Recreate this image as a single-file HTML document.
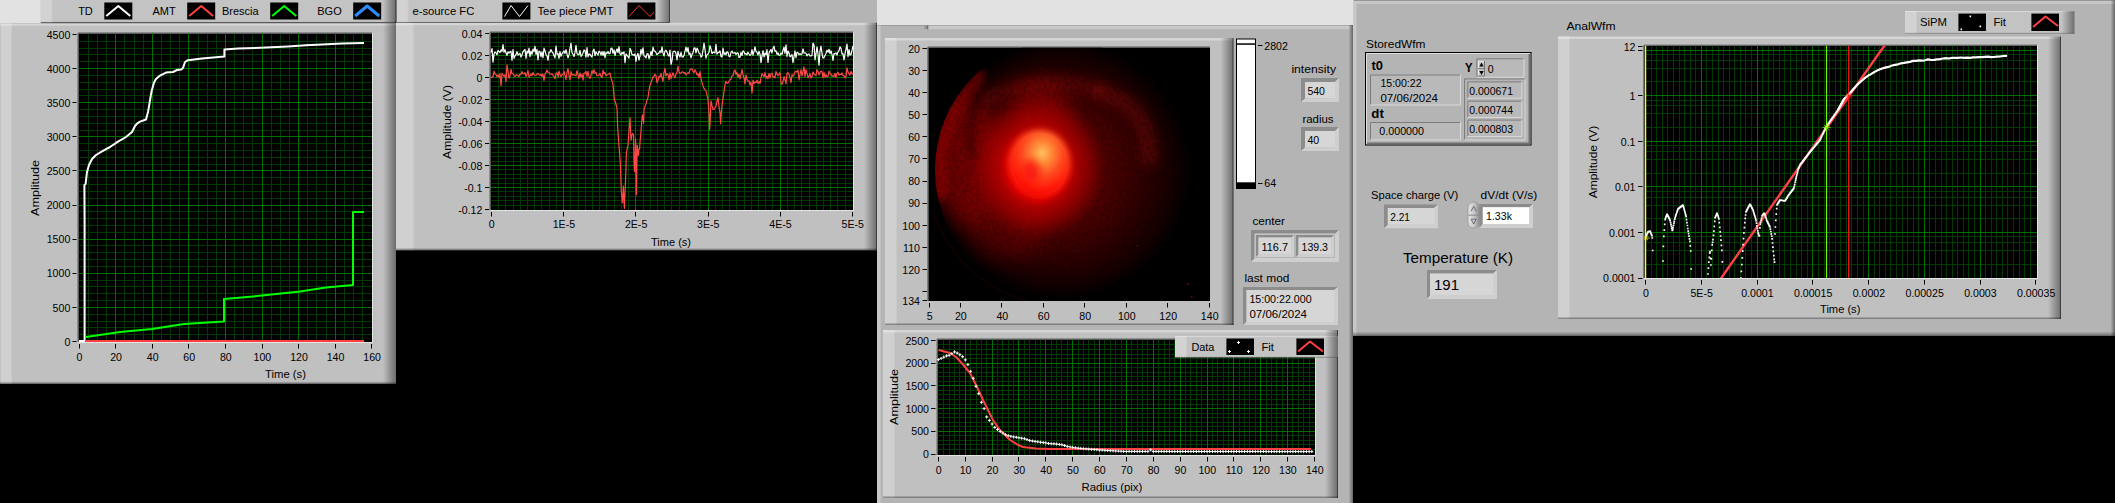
<!DOCTYPE html><html><head><meta charset="utf-8"><title>LabVIEW panels</title><style>html,body{margin:0;padding:0;background:#000;width:2115px;height:503px;overflow:hidden}</style></head><body><svg width="2115" height="503" viewBox="0 0 2115 503" font-family='"Liberation Sans", sans-serif' style="display:block"><defs><linearGradient id="g1" gradientUnits="objectBoundingBox" x1="0" y1="0" x2="1" y2="0"><stop offset="0" stop-color="#fff" stop-opacity="0.26"/><stop offset="0.85" stop-color="#fff" stop-opacity="0.26"/><stop offset="1" stop-color="#fff" stop-opacity="0"/></linearGradient><linearGradient id="g2" gradientUnits="objectBoundingBox" x1="0" y1="0" x2="1" y2="0"><stop offset="0" stop-color="#000" stop-opacity="0"/><stop offset="1" stop-color="#000" stop-opacity="0.44"/></linearGradient><linearGradient id="g3" gradientUnits="objectBoundingBox" x1="0" y1="0" x2="0" y2="1"><stop offset="0" stop-color="#000" stop-opacity="0"/><stop offset="1" stop-color="#000" stop-opacity="0.42"/></linearGradient><linearGradient id="g4" gradientUnits="objectBoundingBox" x1="0" y1="0" x2="1" y2="0"><stop offset="0" stop-color="#a6a6a6"/><stop offset="0.6" stop-color="#8c8c8c"/><stop offset="1" stop-color="#5c5c5c"/></linearGradient><clipPath id="imclip"><rect x="928.4" y="47.5" width="281.6" height="253.5"/></clipPath>
<filter id="noise" x="0" y="0" width="100%" height="100%"><feTurbulence type="fractalNoise" baseFrequency="0.3" numOctaves="2" seed="3" result="n"/><feColorMatrix in="n" type="matrix" values="0 0 0 0 0  0 0 0 0 0  0 0 0 0 0  0.55 0 0 0 -0.17"/></filter>
<filter id="b3" filterUnits="userSpaceOnUse" x="860" y="0" width="420" height="360"><feGaussianBlur stdDeviation="3"/></filter>
<filter id="b6" filterUnits="userSpaceOnUse" x="860" y="0" width="420" height="360"><feGaussianBlur stdDeviation="6"/></filter>
<filter id="b20" filterUnits="userSpaceOnUse" x="860" y="0" width="420" height="360"><feGaussianBlur stdDeviation="22"/></filter>
<filter id="b10" filterUnits="userSpaceOnUse" x="860" y="0" width="420" height="360"><feGaussianBlur stdDeviation="10"/></filter>
<radialGradient id="disk" gradientUnits="userSpaceOnUse" cx="1071" cy="172" r="137" fx="1052" fy="176"><stop offset="0" stop-color="#880000"/><stop offset="0.35" stop-color="#740000"/><stop offset="0.62" stop-color="#5e0000"/><stop offset="0.82" stop-color="#480000"/><stop offset="0.94" stop-color="#340000"/><stop offset="1" stop-color="#000"/></radialGradient>
<radialGradient id="halo" cx="0.5" cy="0.5" r="0.5"><stop offset="0" stop-color="#e00000" stop-opacity="1"/><stop offset="0.42" stop-color="#c80000" stop-opacity="0.95"/><stop offset="0.62" stop-color="#a00000" stop-opacity="0.6"/><stop offset="1" stop-color="#800000" stop-opacity="0"/></radialGradient>
<radialGradient id="core" cx="0.55" cy="0.32" r="0.75"><stop offset="0" stop-color="#ffc060"/><stop offset="0.22" stop-color="#ff8c38"/><stop offset="0.5" stop-color="#ff4a20"/><stop offset="0.8" stop-color="#ff1808"/><stop offset="1" stop-color="#f00000"/></radialGradient><clipPath id="dclip"><ellipse cx="1064" cy="170" rx="129" ry="131"/></clipPath>
<radialGradient id="disk2" gradientUnits="userSpaceOnUse" cx="1062" cy="170" r="129" fx="1040" fy="172"><stop offset="0" stop-color="#700000"/><stop offset="0.35" stop-color="#5c0000"/><stop offset="0.55" stop-color="#420000"/><stop offset="0.75" stop-color="#280000"/><stop offset="0.9" stop-color="#130000"/><stop offset="1" stop-color="#000"/></radialGradient>
<radialGradient id="halo2" cx="0.5" cy="0.5" r="0.5"><stop offset="0" stop-color="#e00000"/><stop offset="0.42" stop-color="#dc0000"/><stop offset="0.56" stop-color="#b80000" stop-opacity="0.85"/><stop offset="0.76" stop-color="#a00000" stop-opacity="0.6"/><stop offset="1" stop-color="#800000" stop-opacity="0"/></radialGradient><linearGradient id="pill" x1="0" y1="0" x2="1" y2="0"><stop offset="0" stop-color="#e6e6e6"/><stop offset="0.55" stop-color="#c6c6c6"/><stop offset="1" stop-color="#8e8e8e"/></linearGradient><clipPath id="p4clip"><rect x="1644.3" y="45.7" width="392.7" height="232.3"/></clipPath></defs><rect x="0" y="0" width="2115" height="503" fill="#000" />
<rect x="0" y="0" width="41" height="23.5" fill="#e2e2e2" />
<rect x="669" y="0" width="209" height="23" fill="#b4b4b4" />
<rect x="877" y="0" width="477" height="25" fill="#e2e2e2" />
<rect x="0" y="23.2" width="396" height="360.6" fill="#c0c0c0" />
<rect x="0" y="23.2" width="12.5" height="360.6" fill="url(#g1)" />
<rect x="0" y="23.2" width="396" height="2.5" fill="#fff" fill-opacity="0.33"/>
<rect x="383" y="23.2" width="13" height="360.6" fill="url(#g2)" />
<rect x="0" y="381.3" width="396" height="2.5" fill="url(#g3)" />
<rect x="0" y="23.2" width="1" height="360.6" fill="#000" fill-opacity="0.06"/>
<rect x="40.5" y="0" width="355" height="22.6" fill="#c3c3c3" />
<rect x="40.5" y="0" width="12.5" height="22.6" fill="url(#g1)" />
<rect x="382.5" y="0" width="13" height="22.6" fill="url(#g2)" />
<rect x="40.5" y="21.4" width="355" height="1.2" fill="url(#g3)" />
<text x="92.8" y="14.7" font-size="11" text-anchor="end" >TD</text>
<rect x="104.3" y="2.5" width="28" height="17" fill="#000" />
<path d="M106.3,16.0 L118.3,6.0 L130.3,16.0" stroke="#fff" stroke-width="2" fill="none" stroke-linejoin="round" />
<text x="175.7" y="14.7" font-size="11" text-anchor="end" >AMT</text>
<rect x="187.2" y="2.5" width="28" height="17" fill="#000" />
<path d="M189.2,16.0 L201.2,6.0 L213.2,16.0" stroke="#ff4040" stroke-width="2" fill="none" stroke-linejoin="round" />
<text x="258.7" y="14.7" font-size="11" text-anchor="end" >Brescia</text>
<rect x="270.2" y="2.5" width="28" height="17" fill="#000" />
<path d="M272.2,16.0 L284.2,6.0 L296.2,16.0" stroke="#00ff00" stroke-width="2" fill="none" stroke-linejoin="round" />
<text x="341.7" y="14.7" font-size="11" text-anchor="end" >BGO</text>
<rect x="353.2" y="2.5" width="28" height="17" fill="#000" />
<path d="M355.2,16.0 L367.2,6.0 L379.2,16.0" stroke="#2e8cff" stroke-width="3" fill="none" stroke-linejoin="round" />
<rect x="78.5" y="33.5" width="293.5" height="308.5" fill="#000" />
<path d="M88.5,33.5V342M97.5,33.5V342M106.5,33.5V342M115.5,33.5V342M124.5,33.5V342M134.5,33.5V342M143.5,33.5V342M152.5,33.5V342M161.5,33.5V342M170.5,33.5V342M179.5,33.5V342M188.5,33.5V342M198.5,33.5V342M207.5,33.5V342M216.5,33.5V342M225.5,33.5V342M234.5,33.5V342M243.5,33.5V342M252.5,33.5V342M262.5,33.5V342M271.5,33.5V342M280.5,33.5V342M289.5,33.5V342M298.5,33.5V342M307.5,33.5V342M316.5,33.5V342M326.5,33.5V342M335.5,33.5V342M344.5,33.5V342M353.5,33.5V342M362.5,33.5V342M78.5,334.5H372M78.5,327.5H372M78.5,321.5H372M78.5,314.5H372M78.5,307.5H372M78.5,300.5H372M78.5,293.5H372M78.5,286.5H372M78.5,280.5H372M78.5,273.5H372M78.5,266.5H372M78.5,259.5H372M78.5,252.5H372M78.5,245.5H372M78.5,239.5H372M78.5,232.5H372M78.5,225.5H372M78.5,218.5H372M78.5,211.5H372M78.5,205.5H372M78.5,198.5H372M78.5,191.5H372M78.5,184.5H372M78.5,177.5H372M78.5,170.5H372M78.5,164.5H372M78.5,157.5H372M78.5,150.5H372M78.5,143.5H372M78.5,136.5H372M78.5,130.5H372M78.5,123.5H372M78.5,116.5H372M78.5,109.5H372M78.5,102.5H372M78.5,95.5H372M78.5,89.5H372M78.5,82.5H372M78.5,75.5H372M78.5,68.5H372M78.5,61.5H372M78.5,54.5H372M78.5,48.5H372M78.5,41.5H372" stroke="#003a00" stroke-width="1" fill="none"/>
<path d="M115.5,33.5V342M152.5,33.5V342M188.5,33.5V342M225.5,33.5V342M262.5,33.5V342M298.5,33.5V342M335.5,33.5V342M78.5,307.5H372M78.5,273.5H372M78.5,239.5H372M78.5,205.5H372M78.5,170.5H372M78.5,136.5H372M78.5,102.5H372M78.5,68.5H372" stroke="#007000" stroke-width="1" fill="none"/>
<path d="M78,342V33H372" stroke="#5a5a5a" stroke-width="1" fill="none"/>
<path d="M78.5,342.5H372.5V33.5" stroke="#e4e4e4" stroke-width="1" fill="none"/>
<path d="M72.5,341.5H76.5M72.5,307.5H76.5M72.5,273.5H76.5M72.5,239.5H76.5M72.5,205.5H76.5M72.5,170.5H76.5M72.5,136.5H76.5M72.5,102.5H76.5M72.5,68.5H76.5M72.5,34.5H76.5" stroke="#000" stroke-width="1" fill="none"/>
<text x="70.3" y="345.7" font-size="10.6" text-anchor="end" >0</text>
<text x="70.3" y="311.59" font-size="10.6" text-anchor="end" >500</text>
<text x="70.3" y="277.48" font-size="10.6" text-anchor="end" >1000</text>
<text x="70.3" y="243.37" font-size="10.6" text-anchor="end" >1500</text>
<text x="70.3" y="209.26" font-size="10.6" text-anchor="end" >2000</text>
<text x="70.3" y="175.15" font-size="10.6" text-anchor="end" >2500</text>
<text x="70.3" y="141.04" font-size="10.6" text-anchor="end" >3000</text>
<text x="70.3" y="106.93" font-size="10.6" text-anchor="end" >3500</text>
<text x="70.3" y="72.82" font-size="10.6" text-anchor="end" >4000</text>
<text x="70.3" y="38.71" font-size="10.6" text-anchor="end" >4500</text>
<path d="M79.5,344V348.5M115.5,344V348.5M152.5,344V348.5M188.5,344V348.5M225.5,344V348.5M262.5,344V348.5M298.5,344V348.5M335.5,344V348.5M371.5,344V348.5" stroke="#000" stroke-width="1" fill="none"/>
<text x="79.5" y="360.7" font-size="10.6" text-anchor="middle" >0</text>
<text x="116.08" y="360.7" font-size="10.6" text-anchor="middle" >20</text>
<text x="152.66" y="360.7" font-size="10.6" text-anchor="middle" >40</text>
<text x="189.24" y="360.7" font-size="10.6" text-anchor="middle" >60</text>
<text x="225.82" y="360.7" font-size="10.6" text-anchor="middle" >80</text>
<text x="262.4" y="360.7" font-size="10.6" text-anchor="middle" >100</text>
<text x="298.98" y="360.7" font-size="10.6" text-anchor="middle" >120</text>
<text x="335.56" y="360.7" font-size="10.6" text-anchor="middle" >140</text>
<text x="372.14" y="360.7" font-size="10.6" text-anchor="middle" >160</text>
<text transform="translate(38.8,188) rotate(-90)" font-size="11" text-anchor="middle" textLength="56" lengthAdjust="spacingAndGlyphs">Amplitude</text>
<text x="265" y="377.7" font-size="11" textLength="41" lengthAdjust="spacingAndGlyphs" >Time (s)</text>
<path d="M86.0,341.0 L364.0,341.0" stroke="#ff4040" stroke-width="2" fill="none" stroke-linejoin="round" />
<path d="M86.0,337.0 L120.0,332.0 L152.0,329.0 L184.0,324.0 L224.0,321.4 L224.0,299.0 L262.0,295.6 L300.0,291.6 L326.0,287.6 L353.0,285.0 L353.0,212.0 L364.0,212.0" stroke="#00ff00" stroke-width="2" fill="none" stroke-linejoin="round" />
<path d="M79.0,341.0 L84.6,341.0 L84.6,220.0 L84.4,185.0 L85.6,184.0 L87.0,172.0 L89.0,165.0 L92.0,159.0 L96.0,155.0 L102.0,151.4 L110.0,147.0 L118.0,141.6 L126.0,137.0 L132.0,132.0 L135.0,126.0 L137.0,123.6 L140.0,121.6 L146.0,119.5 L148.0,112.0 L149.4,104.0 L151.4,92.0 L154.0,82.4 L156.0,79.0 L160.0,75.6 L166.0,72.6 L173.0,72.0 L177.0,70.0 L181.0,69.6 L183.0,68.0 L185.0,62.0 L188.0,60.2 L202.0,58.6 L224.4,56.6 L224.4,49.4 L238.0,48.6 L266.0,47.6 L288.0,46.4 L306.0,45.2 L322.0,44.4 L342.0,43.6 L364.0,43.0" stroke="#fff" stroke-width="2" fill="none" stroke-linejoin="round" />
<rect x="396" y="22.8" width="481" height="227.4" fill="#c0c0c0" />
<rect x="396" y="22.8" width="19" height="227.4" fill="url(#g1)" />
<rect x="396" y="22.8" width="481" height="2.5" fill="#fff" fill-opacity="0.33"/>
<rect x="864" y="22.8" width="13" height="227.4" fill="url(#g2)" />
<rect x="396" y="247.7" width="481" height="2.5" fill="url(#g3)" />
<rect x="876" y="22.8" width="1" height="227.4" fill="#000" fill-opacity="0.45"/>
<rect x="396.5" y="0" width="273.5" height="22.6" fill="#c3c3c3" />
<rect x="396.5" y="0" width="12.5" height="22.6" fill="url(#g1)" />
<rect x="657" y="0" width="13" height="22.6" fill="url(#g2)" />
<rect x="396.5" y="21.4" width="273.5" height="1.2" fill="url(#g3)" />
<rect x="669" y="0" width="1" height="22.6" fill="#000" fill-opacity="0.45"/>
<text x="412.4" y="14.5" font-size="11" textLength="62" lengthAdjust="spacingAndGlyphs" >e-source FC</text>
<rect x="502.4" y="2.5" width="28" height="17" fill="#000" />
<path d="M504.5,16.5 L511.0,5.5 L519.5,16.5 L528.0,5.5" stroke="#fff" stroke-width="1" fill="none" stroke-linejoin="round" />
<text x="537.4" y="14.8" font-size="11" textLength="76.2" lengthAdjust="spacingAndGlyphs" >Tee piece PMT</text>
<rect x="627.4" y="2.5" width="28" height="17" fill="#000" />
<path d="M629.0,16.5 L639.0,5.5 L650.0,16.5 L654.0,12.0" stroke="#ff3030" stroke-width="1" fill="none" stroke-linejoin="round" />
<rect x="490.5" y="32.5" width="362.5" height="177.5" fill="#000" />
<path d="M498.5,32.5V210M505.5,32.5V210M513.5,32.5V210M520.5,32.5V210M527.5,32.5V210M534.5,32.5V210M541.5,32.5V210M549.5,32.5V210M556.5,32.5V210M563.5,32.5V210M570.5,32.5V210M578.5,32.5V210M585.5,32.5V210M592.5,32.5V210M599.5,32.5V210M606.5,32.5V210M614.5,32.5V210M621.5,32.5V210M628.5,32.5V210M635.5,32.5V210M643.5,32.5V210M650.5,32.5V210M657.5,32.5V210M664.5,32.5V210M671.5,32.5V210M679.5,32.5V210M686.5,32.5V210M693.5,32.5V210M700.5,32.5V210M708.5,32.5V210M715.5,32.5V210M722.5,32.5V210M729.5,32.5V210M736.5,32.5V210M744.5,32.5V210M751.5,32.5V210M758.5,32.5V210M765.5,32.5V210M772.5,32.5V210M780.5,32.5V210M787.5,32.5V210M794.5,32.5V210M801.5,32.5V210M809.5,32.5V210M816.5,32.5V210M823.5,32.5V210M830.5,32.5V210M837.5,32.5V210M845.5,32.5V210M490.5,205.5H853M490.5,200.5H853M490.5,196.5H853M490.5,191.5H853M490.5,187.5H853M490.5,183.5H853M490.5,178.5H853M490.5,174.5H853M490.5,169.5H853M490.5,165.5H853M490.5,161.5H853M490.5,156.5H853M490.5,152.5H853M490.5,147.5H853M490.5,143.5H853M490.5,139.5H853M490.5,134.5H853M490.5,130.5H853M490.5,125.5H853M490.5,121.5H853M490.5,117.5H853M490.5,112.5H853M490.5,108.5H853M490.5,103.5H853M490.5,99.5H853M490.5,95.5H853M490.5,90.5H853M490.5,86.5H853M490.5,81.5H853M490.5,77.5H853M490.5,73.5H853M490.5,68.5H853M490.5,64.5H853M490.5,59.5H853M490.5,55.5H853M490.5,51.5H853M490.5,46.5H853M490.5,42.5H853M490.5,37.5H853" stroke="#003a00" stroke-width="1" fill="none"/>
<path d="M563.5,32.5V210M635.5,32.5V210M708.5,32.5V210M780.5,32.5V210M490.5,187.5H853M490.5,165.5H853M490.5,143.5H853M490.5,121.5H853M490.5,99.5H853M490.5,77.5H853M490.5,55.5H853" stroke="#007000" stroke-width="1" fill="none"/>
<path d="M490,210V32H853" stroke="#5a5a5a" stroke-width="1" fill="none"/>
<path d="M490.5,210.5H853.5V32.5" stroke="#e4e4e4" stroke-width="1" fill="none"/>
<path d="M485,209.5H489M485,187.5H489M485,165.5H489M485,143.5H489M485,121.5H489M485,99.5H489M485,77.5H489M485,55.5H489M485,33.5H489" stroke="#000" stroke-width="1" fill="none"/>
<text x="482.4" y="37.6" font-size="10.6" text-anchor="end" >0.04</text>
<text x="482.4" y="59.6" font-size="10.6" text-anchor="end" >0.02</text>
<text x="482.4" y="81.6" font-size="10.6" text-anchor="end" >0</text>
<text x="482.4" y="103.6" font-size="10.6" text-anchor="end" >-0.02</text>
<text x="482.4" y="125.6" font-size="10.6" text-anchor="end" >-0.04</text>
<text x="482.4" y="147.6" font-size="10.6" text-anchor="end" >-0.06</text>
<text x="482.4" y="169.6" font-size="10.6" text-anchor="end" >-0.08</text>
<text x="482.4" y="191.6" font-size="10.6" text-anchor="end" >-0.1</text>
<text x="482.4" y="213.6" font-size="10.6" text-anchor="end" >-0.12</text>
<path d="M491.5,212V216.5M563.5,212V216.5M635.5,212V216.5M708.5,212V216.5M780.5,212V216.5M852.5,212V216.5" stroke="#000" stroke-width="1" fill="none"/>
<text x="491.7" y="228.4" font-size="10.6" text-anchor="middle" >0</text>
<text x="563.9" y="228.4" font-size="10.6" text-anchor="middle" >1E-5</text>
<text x="636.1" y="228.4" font-size="10.6" text-anchor="middle" >2E-5</text>
<text x="708.3" y="228.4" font-size="10.6" text-anchor="middle" >3E-5</text>
<text x="780.5" y="228.4" font-size="10.6" text-anchor="middle" >4E-5</text>
<text x="852.7" y="228.4" font-size="10.6" text-anchor="middle" >5E-5</text>
<text transform="translate(450.5,122) rotate(-90)" font-size="11" text-anchor="middle" textLength="74" lengthAdjust="spacingAndGlyphs">Amplitude (V)</text>
<text x="651" y="245.6" font-size="11" textLength="40" lengthAdjust="spacingAndGlyphs" >Time (s)</text>
<path d="M491.0,52.3 L492.0,48.6 L493.0,62.1 L494.0,54.1 L495.0,52.1 L496.0,52.7 L497.0,54.8 L498.0,50.4 L499.0,51.6 L500.0,52.5 L501.0,49.9 L502.0,51.5 L503.0,44.6 L504.0,52.2 L505.0,49.7 L506.0,53.1 L507.0,55.3 L508.0,51.8 L509.0,53.2 L510.0,51.9 L511.0,51.4 L512.0,60.3 L513.0,49.6 L514.0,58.3 L515.0,56.0 L516.0,54.6 L517.0,51.7 L518.0,55.1 L519.0,54.1 L520.0,53.5 L521.0,57.0 L522.0,54.7 L523.0,51.8 L524.0,50.3 L525.0,49.3 L526.0,58.3 L527.0,51.1 L528.0,53.1 L529.0,48.2 L530.0,56.6 L531.0,51.2 L532.0,54.3 L533.0,49.0 L534.0,51.7 L535.0,46.4 L536.0,54.3 L537.0,49.4 L538.0,60.0 L539.0,51.2 L540.0,51.5 L541.0,56.7 L542.0,51.8 L543.0,57.6 L544.0,48.2 L545.0,50.8 L546.0,54.6 L547.0,55.8 L548.0,60.3 L549.0,52.0 L550.0,52.3 L551.0,49.5 L552.0,51.8 L553.0,53.0 L554.0,55.5 L555.0,58.0 L556.0,46.1 L557.0,54.1 L558.0,53.6 L559.0,58.5 L560.0,51.6 L561.0,56.3 L562.0,53.6 L563.0,52.3 L564.0,51.0 L565.0,53.5 L566.0,49.7 L567.0,53.8 L568.0,57.9 L569.0,54.7 L570.0,48.3 L571.0,43.0 L572.0,52.7 L573.0,54.3 L574.0,56.5 L575.0,52.6 L576.0,45.4 L577.0,53.6 L578.0,54.7 L579.0,54.7 L580.0,50.4 L581.0,56.4 L582.0,55.0 L583.0,53.0 L584.0,49.9 L585.0,50.6 L586.0,57.2 L587.0,47.7 L588.0,56.8 L589.0,54.1 L590.0,54.1 L591.0,56.1 L592.0,57.0 L593.0,51.0 L594.0,49.1 L595.0,55.6 L596.0,51.8 L597.0,53.5 L598.0,55.0 L599.0,51.2 L600.0,51.9 L601.0,55.1 L602.0,51.6 L603.0,55.3 L604.0,51.4 L605.0,57.7 L606.0,52.3 L607.0,53.3 L608.0,51.5 L609.0,53.7 L610.0,53.7 L611.0,48.4 L612.0,48.1 L613.0,53.4 L614.0,49.8 L615.0,55.5 L616.0,51.5 L617.0,48.9 L618.0,52.7 L619.0,46.6 L620.0,53.9 L621.0,55.0 L622.0,52.3 L623.0,53.8 L624.0,51.8 L625.0,62.7 L626.0,53.9 L627.0,55.4 L628.0,56.5 L629.0,58.2 L630.0,48.3 L631.0,50.5 L632.0,54.9 L633.0,54.5 L634.0,55.4 L635.0,53.8 L636.0,61.4 L637.0,55.4 L638.0,53.3 L639.0,60.2 L640.0,56.1 L641.0,49.3 L642.0,54.3 L643.0,47.8 L644.0,55.8 L645.0,56.6 L646.0,57.9 L647.0,53.8 L648.0,53.5 L649.0,58.7 L650.0,55.8 L651.0,51.3 L652.0,55.7 L653.0,47.2 L654.0,51.0 L655.0,51.0 L656.0,52.7 L657.0,54.7 L658.0,53.6 L659.0,53.1 L660.0,50.8 L661.0,52.7 L662.0,46.9 L663.0,53.1 L664.0,55.9 L665.0,51.1 L666.0,50.2 L667.0,52.3 L668.0,54.8 L669.0,56.2 L670.0,50.1 L671.0,64.3 L672.0,60.8 L673.0,51.9 L674.0,51.1 L675.0,51.5 L676.0,53.4 L677.0,60.0 L678.0,51.3 L679.0,55.3 L680.0,56.9 L681.0,52.3 L682.0,56.9 L683.0,57.2 L684.0,55.7 L685.0,51.2 L686.0,47.1 L687.0,51.8 L688.0,47.6 L689.0,54.5 L690.0,52.9 L691.0,57.9 L692.0,54.4 L693.0,52.5 L694.0,48.1 L695.0,47.9 L696.0,52.9 L697.0,48.1 L698.0,50.1 L699.0,53.1 L700.0,53.7 L701.0,57.1 L702.0,56.1 L703.0,50.1 L704.0,43.0 L705.0,49.7 L706.0,58.2 L707.0,54.9 L708.0,54.0 L709.0,52.5 L710.0,45.7 L711.0,48.9 L712.0,53.5 L713.0,52.3 L714.0,52.2 L715.0,52.9 L716.0,44.3 L717.0,54.2 L718.0,52.8 L719.0,52.4 L720.0,50.9 L721.0,56.4 L722.0,56.9 L723.0,48.2 L724.0,54.3 L725.0,52.8 L726.0,54.8 L727.0,51.7 L728.0,52.3 L729.0,56.4 L730.0,56.7 L731.0,52.4 L732.0,51.1 L733.0,53.2 L734.0,53.0 L735.0,52.5 L736.0,54.4 L737.0,53.1 L738.0,52.9 L739.0,57.5 L740.0,57.2 L741.0,52.4 L742.0,55.5 L743.0,50.8 L744.0,51.6 L745.0,54.2 L746.0,53.4 L747.0,54.9 L748.0,52.2 L749.0,54.0 L750.0,55.4 L751.0,54.4 L752.0,49.5 L753.0,55.2 L754.0,51.7 L755.0,46.8 L756.0,51.3 L757.0,52.6 L758.0,55.0 L759.0,51.3 L760.0,54.1 L761.0,62.6 L762.0,55.6 L763.0,50.7 L764.0,57.0 L765.0,53.1 L766.0,54.7 L767.0,49.7 L768.0,62.5 L769.0,53.0 L770.0,51.1 L771.0,49.5 L772.0,53.0 L773.0,48.3 L774.0,46.2 L775.0,51.3 L776.0,50.7 L777.0,54.4 L778.0,52.7 L779.0,55.4 L780.0,55.2 L781.0,53.0 L782.0,54.3 L783.0,50.3 L784.0,47.1 L785.0,53.3 L786.0,44.9 L787.0,56.4 L788.0,51.1 L789.0,53.0 L790.0,56.8 L791.0,56.0 L792.0,54.4 L793.0,62.6 L794.0,56.6 L795.0,50.9 L796.0,57.7 L797.0,52.4 L798.0,52.8 L799.0,54.7 L800.0,53.6 L801.0,54.7 L802.0,53.9 L803.0,48.8 L804.0,53.2 L805.0,52.8 L806.0,53.2 L807.0,55.9 L808.0,54.3 L809.0,54.0 L810.0,55.8 L811.0,55.9 L812.0,55.4 L813.0,43.0 L814.0,44.7 L815.0,59.8 L816.0,53.7 L817.0,46.8 L818.0,54.2 L819.0,65.3 L820.0,51.2 L821.0,46.0 L822.0,53.5 L823.0,58.0 L824.0,57.9 L825.0,55.2 L826.0,53.5 L827.0,50.2 L828.0,52.2 L829.0,49.2 L830.0,53.6 L831.0,50.8 L832.0,54.5 L833.0,60.5 L834.0,53.7 L835.0,53.8 L836.0,52.8 L837.0,55.0 L838.0,52.0 L839.0,50.7 L840.0,46.9 L841.0,48.4 L842.0,54.0 L843.0,53.6 L844.0,59.8 L845.0,53.5 L846.0,49.3 L847.0,44.0 L848.0,56.6 L849.0,49.7 L850.0,55.1 L851.0,54.5 L852.0,50.4 L853.0,45.9" stroke="#fff" stroke-width="1.2" fill="none" stroke-linejoin="round" />
<path d="M491.0,78.3 L492.0,76.7 L493.0,76.9 L494.0,71.1 L495.0,74.0 L496.0,74.5 L497.0,76.7 L498.0,74.8 L499.0,77.4 L500.0,73.9 L501.0,85.8 L502.0,73.2 L503.0,74.8 L504.0,76.0 L505.0,74.8 L506.0,81.3 L507.0,64.8 L508.0,71.7 L509.0,78.2 L510.0,75.8 L511.0,69.4 L512.0,73.6 L513.0,73.7 L514.0,75.3 L515.0,76.5 L516.0,74.9 L517.0,75.1 L518.0,75.6 L519.0,76.6 L520.0,74.0 L521.0,74.5 L522.0,71.6 L523.0,73.7 L524.0,73.9 L525.0,72.5 L526.0,76.6 L527.0,74.1 L528.0,70.7 L529.0,77.0 L530.0,75.9 L531.0,73.9 L532.0,75.7 L533.0,72.5 L534.0,74.8 L535.0,75.0 L536.0,75.5 L537.0,74.1 L538.0,73.3 L539.0,74.6 L540.0,75.6 L541.0,74.1 L542.0,76.1 L543.0,74.2 L544.0,80.4 L545.0,74.1 L546.0,72.7 L547.0,70.0 L548.0,72.2 L549.0,72.3 L550.0,73.9 L551.0,74.2 L552.0,73.7 L553.0,75.5 L554.0,76.2 L555.0,78.9 L556.0,73.4 L557.0,72.7 L558.0,76.8 L559.0,71.2 L560.0,74.4 L561.0,76.7 L562.0,74.5 L563.0,74.6 L564.0,71.4 L565.0,75.4 L566.0,79.5 L567.0,72.2 L568.0,68.5 L569.0,75.3 L570.0,79.8 L571.0,71.6 L572.0,75.2 L573.0,74.4 L574.0,75.2 L575.0,75.1 L576.0,75.8 L577.0,70.5 L578.0,75.1 L579.0,78.5 L580.0,72.8 L581.0,77.1 L582.0,74.1 L583.0,80.2 L584.0,73.0 L585.0,73.1 L586.0,71.5 L587.0,76.1 L588.0,71.3 L589.0,77.0 L590.0,78.5 L591.0,75.5 L592.0,70.7 L593.0,73.7 L594.0,69.7 L595.0,73.1 L596.0,72.5 L597.0,75.7 L598.0,75.6 L599.0,74.9 L600.0,73.3 L601.0,76.7 L602.0,77.7 L603.0,70.2 L604.0,74.0 L605.0,72.4 L606.0,75.8 L607.0,75.1 L608.0,74.2 L609.0,74.0 L610.0,73.0 L611.0,78.3 L612.0,80.9 L613.0,84.3 L614.0,96.0 L614.4,100.8 L615.0,100.9 L616.0,104.5 L617.0,108.2 L617.6,125.8 L618.0,132.5 L619.0,145.7 L620.0,158.5 L620.4,164.5 L621.0,182.8 L621.4,193.1 L622.0,198.1 L622.4,202.6 L623.0,192.7 L623.4,186.1 L624.0,201.7 L624.4,208.4 L625.0,193.0 L625.6,179.2 L626.0,166.2 L626.4,153.3 L627.0,149.4 L628.0,145.4 L629.0,130.6 L630.0,117.6 L631.0,140.3 L632.0,134.8 L632.4,133.5 L633.0,133.8 L633.6,135.4 L634.0,164.3 L634.6,171.6 L635.0,159.3 L635.6,139.2 L636.0,166.4 L636.4,194.7 L637.0,156.8 L637.2,145.0 L638.0,151.6 L638.4,155.3 L639.0,149.4 L639.6,148.9 L640.0,142.5 L641.0,131.0 L642.0,118.5 L642.4,114.9 L643.0,117.9 L643.6,123.1 L644.0,109.5 L645.0,106.4 L646.0,103.9 L647.0,100.1 L648.0,97.4 L649.0,90.3 L650.0,85.2 L651.0,82.8 L652.0,79.7 L653.0,77.0 L654.0,76.2 L655.0,74.2 L656.0,75.7 L657.0,82.6 L658.0,80.5 L659.0,76.2 L660.0,77.1 L661.0,73.3 L662.0,77.7 L663.0,81.4 L664.0,72.5 L665.0,68.4 L666.0,76.0 L667.0,73.6 L668.0,74.5 L669.0,79.8 L670.0,72.8 L671.0,78.6 L672.0,75.5 L673.0,72.8 L674.0,76.0 L675.0,77.8 L676.0,74.2 L677.0,72.6 L678.0,66.4 L679.0,71.7 L680.0,73.6 L681.0,73.0 L682.0,72.0 L683.0,71.8 L684.0,73.2 L685.0,72.4 L686.0,75.0 L687.0,73.7 L688.0,72.7 L689.0,73.4 L690.0,69.9 L691.0,68.8 L692.0,68.9 L693.0,71.4 L694.0,72.6 L695.0,69.7 L696.0,71.7 L697.0,75.0 L698.0,73.7 L699.0,77.7 L700.0,71.6 L701.0,78.7 L702.0,82.9 L703.0,86.0 L704.0,88.5 L705.0,89.7 L706.0,90.7 L707.0,95.2 L708.0,99.0 L709.0,113.1 L709.6,129.8 L710.0,123.7 L711.0,100.9 L712.0,105.7 L713.0,109.5 L714.0,109.6 L715.0,107.6 L716.0,106.3 L717.0,101.0 L718.0,97.7 L719.0,106.7 L720.0,112.4 L720.6,123.6 L721.0,116.7 L722.0,105.5 L723.0,98.4 L724.0,91.5 L725.0,84.4 L726.0,81.2 L727.0,83.4 L728.0,83.0 L729.0,81.0 L730.0,79.7 L731.0,79.3 L732.0,75.6 L733.0,75.7 L734.0,71.1 L735.0,69.9 L736.0,74.5 L737.0,72.3 L738.0,77.2 L739.0,74.2 L740.0,78.8 L741.0,74.3 L742.0,69.5 L743.0,75.0 L744.0,77.7 L745.0,83.8 L746.0,74.9 L747.0,78.9 L748.0,81.2 L749.0,81.0 L750.0,84.8 L751.0,82.2 L752.0,93.1 L753.0,80.2 L754.0,83.7 L755.0,82.0 L756.0,82.6 L757.0,80.3 L758.0,83.3 L759.0,81.5 L760.0,83.6 L761.0,77.6 L762.0,73.7 L763.0,75.1 L764.0,76.6 L765.0,72.5 L766.0,78.1 L767.0,76.2 L768.0,78.7 L769.0,73.4 L770.0,78.2 L771.0,74.2 L772.0,73.2 L773.0,77.2 L774.0,76.5 L775.0,77.8 L776.0,71.4 L777.0,74.3 L778.0,75.6 L779.0,74.2 L780.0,72.7 L781.0,83.0 L782.0,84.3 L783.0,81.6 L784.0,76.5 L785.0,79.8 L786.0,83.6 L787.0,73.4 L788.0,72.7 L789.0,74.5 L790.0,77.9 L791.0,82.6 L792.0,74.7 L793.0,76.0 L794.0,74.5 L795.0,71.9 L796.0,71.2 L797.0,72.0 L798.0,70.0 L799.0,79.9 L800.0,74.7 L801.0,69.7 L802.0,75.8 L803.0,71.5 L804.0,66.9 L805.0,76.6 L806.0,69.7 L807.0,73.3 L808.0,77.8 L809.0,76.1 L810.0,73.6 L811.0,78.0 L812.0,76.6 L813.0,71.9 L814.0,74.1 L815.0,74.9 L816.0,75.7 L817.0,69.4 L818.0,71.8 L819.0,75.0 L820.0,72.5 L821.0,71.0 L822.0,71.6 L823.0,77.6 L824.0,72.3 L825.0,77.4 L826.0,74.5 L827.0,76.7 L828.0,76.5 L829.0,71.1 L830.0,73.2 L831.0,74.4 L832.0,76.1 L833.0,75.7 L834.0,76.5 L835.0,73.3 L836.0,77.5 L837.0,73.4 L838.0,72.5 L839.0,75.1 L840.0,74.3 L841.0,74.7 L842.0,72.9 L843.0,75.4 L844.0,75.8 L845.0,77.8 L846.0,76.6 L847.0,67.9 L848.0,71.9 L849.0,74.1 L850.0,75.0 L851.0,71.3 L852.0,74.1 L853.0,72.9" stroke="#ff4848" stroke-width="1.2" fill="none" stroke-linejoin="round" />
<rect x="877" y="25.1" width="476" height="484.9" fill="#b4b4b4" />
<rect x="877" y="25.1" width="3.5" height="481.4" fill="#fff" fill-opacity="0.27"/>
<rect x="1348.6" y="25.1" width="4.4" height="484.9" fill="url(#g2)" />
<rect x="877" y="505.6" width="476" height="4.4" fill="url(#g3)" />
<rect x="877" y="25.1" width="476" height="0.7" fill="#000" fill-opacity="0.06"/>
<rect x="928.3" y="25.6" width="421" height="3.6" fill="#c8c8c8" />
<rect x="924" y="25.4" width="4.2" height="3.8" fill="url(#g4)" />
<rect x="885" y="38" width="348.5" height="287" fill="#c0c0c0" />
<rect x="885" y="38" width="12.5" height="287" fill="url(#g1)" />
<rect x="885" y="38" width="348.5" height="2.5" fill="#fff" fill-opacity="0.33"/>
<rect x="1220.5" y="38" width="13" height="287" fill="url(#g2)" />
<rect x="885" y="322.5" width="348.5" height="2.5" fill="url(#g3)" />
<rect x="1232.5" y="38" width="1" height="287" fill="#000" fill-opacity="0.45"/>
<rect x="928.4" y="47.5" width="281.6" height="253.5" fill="#000" />
<g clip-path="url(#imclip)">
<circle cx="1062" cy="170" r="129" fill="url(#disk2)"/>
<g clip-path="url(#dclip)">
<ellipse cx="968" cy="160" rx="36" ry="66" fill="#b80000" opacity="0.5" filter="url(#b10)"/>
<ellipse cx="1006" cy="228" rx="40" ry="30" fill="#a80000" opacity="0.3" filter="url(#b10)"/>
<path d="M972.8,77.4 A129,131 0 0 0 936.5,190" stroke="#c80404" stroke-width="24" fill="none" opacity="0.42" filter="url(#b3)" stroke-linecap="round"/>
<path d="M978,100 C968,122 968,140 974,156" stroke="#000" stroke-width="8" fill="none" opacity="0.3" filter="url(#b3)" stroke-linecap="round"/>
<path d="M990,98 C1015,82 1060,78 1098,90" stroke="#a00808" stroke-width="16" fill="none" opacity="0.3" filter="url(#b6)" stroke-linecap="round"/>
<path d="M1100,92 C1133,100 1150,124 1149,158" stroke="#b00c0c" stroke-width="17" fill="none" opacity="0.32" filter="url(#b6)" stroke-linecap="round"/>
<ellipse cx="1040" cy="112" rx="30" ry="30" fill="#c00000" opacity="0.45" filter="url(#b10)"/>
</g>
<path d="M934,215 A139,139 0 0 0 1040,304" fill="none" stroke="#300000" stroke-width="1.2" opacity="0.5"/>
<rect x="928" y="47" width="283" height="255" fill="#000" filter="url(#noise)"/>
<ellipse cx="1037" cy="167" rx="69" ry="73" fill="url(#halo2)"/>
<ellipse cx="1039.5" cy="164" rx="31" ry="34" fill="url(#core)" filter="url(#b3)"/>
<ellipse cx="1039.5" cy="164" rx="27" ry="30" fill="url(#core)"/>
<ellipse cx="1031" cy="171" rx="9" ry="11" fill="#f80c08" opacity="0.7" filter="url(#b3)"/>
<path d="M1191,296h1.4v1.4h-1.4zM1187,283h1.6v1.6h-1.6zM1137,245h1.2v1.2h-1.2zM938,190h1.2v1.2h-1.2z" fill="#900000"/>
</g>
<path d="M927.9,301V47.0H1210" stroke="#5a5a5a" stroke-width="1" fill="none"/>
<path d="M922.5,48.5H927M922.5,70.5H927M922.5,92.5H927M922.5,114.5H927M922.5,136.5H927M922.5,158.5H927M922.5,181.5H927M922.5,203.5H927M922.5,225.5H927M922.5,247.5H927M922.5,269.5H927M922.5,291.5H927M922.5,300.5H927" stroke="#000" stroke-width="1" fill="none"/>
<text x="920" y="52.7" font-size="10.6" text-anchor="end" >20</text>
<text x="920" y="74.8" font-size="10.6" text-anchor="end" >30</text>
<text x="920" y="96.9" font-size="10.6" text-anchor="end" >40</text>
<text x="920" y="119" font-size="10.6" text-anchor="end" >50</text>
<text x="920" y="141.1" font-size="10.6" text-anchor="end" >60</text>
<text x="920" y="163.2" font-size="10.6" text-anchor="end" >70</text>
<text x="920" y="185.3" font-size="10.6" text-anchor="end" >80</text>
<text x="920" y="207.4" font-size="10.6" text-anchor="end" >90</text>
<text x="920" y="229.5" font-size="10.6" text-anchor="end" >100</text>
<text x="920" y="251.6" font-size="10.6" text-anchor="end" >110</text>
<text x="920" y="273.7" font-size="10.6" text-anchor="end" >120</text>
<text x="920" y="304.64" font-size="10.6" text-anchor="end" >134</text>
<path d="M929.5,303V307.5M960.5,303V307.5M1001.5,303V307.5M1043.5,303V307.5M1084.5,303V307.5M1126.5,303V307.5M1167.5,303V307.5M1209.5,303V307.5" stroke="#000" stroke-width="1" fill="none"/>
<text x="929.7" y="319.6" font-size="10.6" text-anchor="middle" >5</text>
<text x="960.81" y="319.6" font-size="10.6" text-anchor="middle" >20</text>
<text x="1002.29" y="319.6" font-size="10.6" text-anchor="middle" >40</text>
<text x="1043.77" y="319.6" font-size="10.6" text-anchor="middle" >60</text>
<text x="1085.25" y="319.6" font-size="10.6" text-anchor="middle" >80</text>
<text x="1126.73" y="319.6" font-size="10.6" text-anchor="middle" >100</text>
<text x="1168.21" y="319.6" font-size="10.6" text-anchor="middle" >120</text>
<text x="1209.69" y="319.6" font-size="10.6" text-anchor="middle" >140</text>
<rect x="1236" y="38.5" width="20" height="150.5" fill="#000" />
<rect x="1237" y="39.5" width="18" height="142.8" fill="#fff" />
<rect x="1237" y="43.3" width="18" height="1.5" fill="#000" />
<path d="M1258,45.5H1262.5M1258,183.5H1262.5" stroke="#000" stroke-width="1" fill="none"/>
<text x="1264.3" y="50" font-size="10.6" textLength="23.6" lengthAdjust="spacingAndGlyphs" >2802</text>
<text x="1264.3" y="187" font-size="10.6" >64</text>
<text x="1291.4" y="73" font-size="11.5" textLength="44.6" lengthAdjust="spacingAndGlyphs" >intensity</text>
<path d="M1301,78H1339L1335,82H1305V98.4L1301,102Z" fill="#8c8c8c"/>
<path d="M1339,102H1301L1305,98.4H1335V82L1339,78Z" fill="#cfcfcf"/>
<rect x="1305" y="82" width="30" height="16.4" fill="#d6d6d6" />
<text x="1307.4" y="95" font-size="10.6" textLength="17.6" lengthAdjust="spacingAndGlyphs" >540</text>
<text x="1302.4" y="123" font-size="11.5" textLength="31.2" lengthAdjust="spacingAndGlyphs" >radius</text>
<path d="M1301,127H1339L1335,131H1305V147.4L1301,151Z" fill="#8c8c8c"/>
<path d="M1339,151H1301L1305,147.4H1335V131L1339,127Z" fill="#cfcfcf"/>
<rect x="1305" y="131" width="30" height="16.4" fill="#d6d6d6" />
<text x="1307.4" y="144" font-size="10.6" >40</text>
<text x="1252.4" y="225" font-size="11.5" textLength="32.6" lengthAdjust="spacingAndGlyphs" >center</text>
<path d="M1251,230H1339L1335,234H1255V258L1251,262Z" fill="#8c8c8c"/>
<path d="M1339,262H1251L1255,258H1335V234L1339,230Z" fill="#cfcfcf"/>
<rect x="1255" y="234" width="80" height="24" fill="#b4b4b4" />
<path d="M1255,258V234H1335" stroke="#d0d0d0" stroke-width="1" fill="none"/>
<path d="M1256,235H1294L1291.5,237.5H1258.5V254.5L1256,257Z" fill="#8c8c8c"/>
<path d="M1294,257H1256L1258.5,254.5H1291.5V237.5L1294,235Z" fill="#cfcfcf"/>
<rect x="1258.5" y="237.5" width="33" height="17" fill="#d6d6d6" />
<path d="M1296,235H1334L1331.5,237.5H1298.5V254.5L1296,257Z" fill="#8c8c8c"/>
<path d="M1334,257H1296L1298.5,254.5H1331.5V237.5L1334,235Z" fill="#cfcfcf"/>
<rect x="1298.5" y="237.5" width="33" height="17" fill="#d6d6d6" />
<text x="1261.5" y="250.5" font-size="10.6" textLength="26.5" lengthAdjust="spacingAndGlyphs" >116.7</text>
<text x="1301.5" y="250.5" font-size="10.6" textLength="26.5" lengthAdjust="spacingAndGlyphs" >139.3</text>
<text x="1244.4" y="282" font-size="11.5" textLength="45" lengthAdjust="spacingAndGlyphs" >last mod</text>
<path d="M1243,287H1338L1334,290H1246.5V322L1243,325Z" fill="#8c8c8c"/>
<path d="M1338,325H1243L1246.5,322H1334V290L1338,287Z" fill="#cfcfcf"/>
<rect x="1246.5" y="290" width="87.5" height="32" fill="#d6d6d6" />
<text x="1249.4" y="303" font-size="10.6" textLength="62.2" lengthAdjust="spacingAndGlyphs" >15:00:22.000</text>
<text x="1249.4" y="318" font-size="10.6" textLength="57.6" lengthAdjust="spacingAndGlyphs" >07/06/2024</text>
<rect x="883" y="330" width="455" height="168" fill="#c0c0c0" />
<rect x="883" y="330" width="12.5" height="168" fill="url(#g1)" />
<rect x="883" y="330" width="455" height="2.5" fill="#fff" fill-opacity="0.33"/>
<rect x="1325" y="330" width="13" height="168" fill="url(#g2)" />
<rect x="883" y="495.5" width="455" height="2.5" fill="url(#g3)" />
<rect x="1337" y="330" width="1" height="168" fill="#000" fill-opacity="0.45"/>
<rect x="937.6" y="339.5" width="377.4" height="115.5" fill="#000" />
<path d="M943.5,339.5V455M949.5,339.5V455M954.5,339.5V455M959.5,339.5V455M965.5,339.5V455M970.5,339.5V455M976.5,339.5V455M981.5,339.5V455M986.5,339.5V455M992.5,339.5V455M997.5,339.5V455M1002.5,339.5V455M1008.5,339.5V455M1013.5,339.5V455M1018.5,339.5V455M1024.5,339.5V455M1029.5,339.5V455M1035.5,339.5V455M1040.5,339.5V455M1045.5,339.5V455M1051.5,339.5V455M1056.5,339.5V455M1061.5,339.5V455M1067.5,339.5V455M1072.5,339.5V455M1078.5,339.5V455M1083.5,339.5V455M1088.5,339.5V455M1094.5,339.5V455M1099.5,339.5V455M1104.5,339.5V455M1110.5,339.5V455M1115.5,339.5V455M1121.5,339.5V455M1126.5,339.5V455M1131.5,339.5V455M1137.5,339.5V455M1142.5,339.5V455M1147.5,339.5V455M1153.5,339.5V455M1158.5,339.5V455M1164.5,339.5V455M1169.5,339.5V455M1174.5,339.5V455M1180.5,339.5V455M1185.5,339.5V455M1190.5,339.5V455M1196.5,339.5V455M1201.5,339.5V455M1207.5,339.5V455M1212.5,339.5V455M1217.5,339.5V455M1223.5,339.5V455M1228.5,339.5V455M1233.5,339.5V455M1239.5,339.5V455M1244.5,339.5V455M1249.5,339.5V455M1255.5,339.5V455M1260.5,339.5V455M1266.5,339.5V455M1271.5,339.5V455M1276.5,339.5V455M1282.5,339.5V455M1287.5,339.5V455M1292.5,339.5V455M1298.5,339.5V455M1303.5,339.5V455M1309.5,339.5V455M937.6,449.5H1315M937.6,444.5H1315M937.6,440.5H1315M937.6,435.5H1315M937.6,431.5H1315M937.6,426.5H1315M937.6,422.5H1315M937.6,417.5H1315M937.6,413.5H1315M937.6,408.5H1315M937.6,404.5H1315M937.6,399.5H1315M937.6,394.5H1315M937.6,390.5H1315M937.6,385.5H1315M937.6,381.5H1315M937.6,376.5H1315M937.6,372.5H1315M937.6,367.5H1315M937.6,363.5H1315M937.6,358.5H1315M937.6,354.5H1315M937.6,349.5H1315M937.6,344.5H1315" stroke="#003a00" stroke-width="1" fill="none"/>
<path d="M965.5,339.5V455M992.5,339.5V455M1018.5,339.5V455M1045.5,339.5V455M1072.5,339.5V455M1099.5,339.5V455M1126.5,339.5V455M1153.5,339.5V455M1180.5,339.5V455M1207.5,339.5V455M1233.5,339.5V455M1260.5,339.5V455M1287.5,339.5V455M937.6,431.5H1315M937.6,408.5H1315M937.6,385.5H1315M937.6,363.5H1315" stroke="#007000" stroke-width="1" fill="none"/>
<path d="M937.1,455V339H1315" stroke="#5a5a5a" stroke-width="1" fill="none"/>
<path d="M937.6,455.5H1315.5V339.5" stroke="#e4e4e4" stroke-width="1" fill="none"/>
<path d="M931,454.5H935.5M931,431.5H935.5M931,408.5H935.5M931,385.5H935.5M931,363.5H935.5M931,340.5H935.5" stroke="#000" stroke-width="1" fill="none"/>
<text x="929" y="458.2" font-size="10.6" text-anchor="end" >0</text>
<text x="929" y="435.48" font-size="10.6" text-anchor="end" >500</text>
<text x="929" y="412.76" font-size="10.6" text-anchor="end" >1000</text>
<text x="929" y="390.04" font-size="10.6" text-anchor="end" >1500</text>
<text x="929" y="367.32" font-size="10.6" text-anchor="end" >2000</text>
<text x="929" y="344.6" font-size="10.6" text-anchor="end" >2500</text>
<path d="M938.5,457V461.5M965.5,457V461.5M992.5,457V461.5M1018.5,457V461.5M1045.5,457V461.5M1072.5,457V461.5M1099.5,457V461.5M1126.5,457V461.5M1153.5,457V461.5M1180.5,457V461.5M1207.5,457V461.5M1233.5,457V461.5M1260.5,457V461.5M1287.5,457V461.5M1314.5,457V461.5" stroke="#000" stroke-width="1" fill="none"/>
<text x="938.7" y="474" font-size="10.6" text-anchor="middle" >0</text>
<text x="965.56" y="474" font-size="10.6" text-anchor="middle" >10</text>
<text x="992.42" y="474" font-size="10.6" text-anchor="middle" >20</text>
<text x="1019.28" y="474" font-size="10.6" text-anchor="middle" >30</text>
<text x="1046.14" y="474" font-size="10.6" text-anchor="middle" >40</text>
<text x="1073" y="474" font-size="10.6" text-anchor="middle" >50</text>
<text x="1099.86" y="474" font-size="10.6" text-anchor="middle" >60</text>
<text x="1126.72" y="474" font-size="10.6" text-anchor="middle" >70</text>
<text x="1153.58" y="474" font-size="10.6" text-anchor="middle" >80</text>
<text x="1180.44" y="474" font-size="10.6" text-anchor="middle" >90</text>
<text x="1207.3" y="474" font-size="10.6" text-anchor="middle" >100</text>
<text x="1234.16" y="474" font-size="10.6" text-anchor="middle" >110</text>
<text x="1261.02" y="474" font-size="10.6" text-anchor="middle" >120</text>
<text x="1287.88" y="474" font-size="10.6" text-anchor="middle" >130</text>
<text x="1314.74" y="474" font-size="10.6" text-anchor="middle" >140</text>
<text transform="translate(897.6,397) rotate(-90)" font-size="11.5" text-anchor="middle" textLength="56" lengthAdjust="spacingAndGlyphs">Amplitude</text>
<text x="1081.4" y="491" font-size="11.5" textLength="61" lengthAdjust="spacingAndGlyphs" >Radius (pix)</text>
<path d="M938.6,350.0 L950.0,353.0 L956.0,357.0 L963.0,364.5 L970.0,373.0 L978.0,389.0 L983.0,400.0 L988.0,410.0 L993.0,420.0 L1000.0,430.0 L1010.0,440.0 L1018.0,445.0 L1023.0,447.0 L1036.0,448.6 L1050.0,449.0 L1311.0,449.0" stroke="#ff4040" stroke-width="2" fill="none" stroke-linejoin="round" />
<path d="M936.9,359.6h3M938.4,358.1v3M939.6,358.4h3M941.1,356.9v3M942.3,357.1h3M943.8,355.6v3M945.0,355.9h3M946.5,354.4v3M947.6,355.3h3M949.1,353.8v3M950.3,353.6h3M951.8,352.1v3M953.0,351.9h3M954.5,350.4v3M955.7,353.0h3M957.2,351.5v3M958.4,354.7h3M959.9,353.2v3M961.1,356.7h3M962.6,355.2v3M963.8,359.9h3M965.3,358.4v3M966.4,364.7h3M967.9,363.2v3M969.1,371.4h3M970.6,369.9v3M971.8,378.3h3M973.3,376.8v3M974.5,386.3h3M976.0,384.8v3M977.2,393.7h3M978.7,392.2v3M979.9,402.3h3M981.4,400.8v3M982.6,408.6h3M984.1,407.1v3M985.2,416.9h3M986.7,415.4v3M987.9,420.4h3M989.4,418.9v3M990.6,424.0h3M992.1,422.5v3M993.3,427.4h3M994.8,425.9v3M996.0,429.6h3M997.5,428.1v3M998.7,431.5h3M1000.2,430.0v3M1001.4,433.1h3M1002.9,431.6v3M1004.0,434.7h3M1005.5,433.2v3M1006.7,435.6h3M1008.2,434.1v3M1009.4,436.3h3M1010.9,434.8v3M1012.1,436.9h3M1013.6,435.4v3M1014.8,437.3h3M1016.3,435.8v3M1017.5,437.8h3M1019.0,436.3v3M1020.2,438.2h3M1021.7,436.7v3M1022.9,438.7h3M1024.4,437.2v3M1025.5,439.6h3M1027.0,438.1v3M1028.2,440.5h3M1029.7,439.0v3M1030.9,441.0h3M1032.4,439.5v3M1033.6,441.4h3M1035.1,439.9v3M1036.3,441.8h3M1037.8,440.3v3M1039.0,442.2h3M1040.5,440.7v3M1041.7,442.5h3M1043.2,441.0v3M1044.3,442.9h3M1045.8,441.4v3M1047.0,443.4h3M1048.5,441.9v3M1049.7,443.7h3M1051.2,442.2v3M1052.4,443.8h3M1053.9,442.3v3M1055.1,444.0h3M1056.6,442.5v3M1057.8,444.4h3M1059.3,442.9v3M1060.5,444.8h3M1062.0,443.3v3M1063.1,445.5h3M1064.6,444.0v3M1065.8,446.4h3M1067.3,444.9v3M1068.5,446.9h3M1070.0,445.4v3M1071.2,447.4h3M1072.7,445.9v3M1073.9,447.8h3M1075.4,446.3v3M1076.6,448.1h3M1078.1,446.6v3M1079.3,448.4h3M1080.8,446.9v3M1081.9,448.7h3M1083.4,447.2v3M1084.6,448.9h3M1086.1,447.4v3M1087.3,449.1h3M1088.8,447.6v3M1090.0,449.3h3M1091.5,447.8v3M1092.7,449.5h3M1094.2,448.0v3M1095.4,449.7h3M1096.9,448.2v3M1098.1,450.0h3M1099.6,448.5v3M1100.7,450.1h3M1102.2,448.6v3M1103.4,450.3h3M1104.9,448.8v3M1106.1,450.5h3M1107.6,449.0v3M1108.8,450.6h3M1110.3,449.1v3M1111.5,450.8h3M1113.0,449.3v3M1114.2,450.9h3M1115.7,449.4v3M1116.9,451.1h3M1118.4,449.6v3M1119.5,451.2h3M1121.0,449.7v3M1122.2,451.4h3M1123.7,449.9v3M1124.9,451.4h3M1126.4,449.9v3M1127.6,451.4h3M1129.1,449.9v3M1130.3,451.4h3M1131.8,449.9v3M1133.0,451.4h3M1134.5,449.9v3M1135.7,451.4h3M1137.2,449.9v3M1138.3,451.4h3M1139.8,449.9v3M1141.0,451.4h3M1142.5,449.9v3M1143.7,451.4h3M1145.2,449.9v3M1146.4,451.4h3M1147.9,449.9v3M1149.1,449.9h3M1150.6,448.4v3M1151.8,451.4h3M1153.3,449.9v3M1154.5,451.4h3M1156.0,449.9v3M1157.2,451.4h3M1158.7,449.9v3M1159.8,451.4h3M1161.3,449.9v3M1162.5,451.4h3M1164.0,449.9v3M1165.2,451.4h3M1166.7,449.9v3M1167.9,451.4h3M1169.4,449.9v3M1170.6,451.5h3M1172.1,450.0v3M1173.3,451.5h3M1174.8,450.0v3M1176.0,451.5h3M1177.5,450.0v3M1178.6,451.5h3M1180.1,450.0v3M1181.3,451.5h3M1182.8,450.0v3M1184.0,451.5h3M1185.5,450.0v3M1186.7,451.5h3M1188.2,450.0v3M1189.4,451.5h3M1190.9,450.0v3M1192.1,451.5h3M1193.6,450.0v3M1194.8,451.5h3M1196.3,450.0v3M1197.4,451.5h3M1198.9,450.0v3M1200.1,451.5h3M1201.6,450.0v3M1202.8,451.5h3M1204.3,450.0v3M1205.5,451.5h3M1207.0,450.0v3M1208.2,451.5h3M1209.7,450.0v3M1210.9,451.5h3M1212.4,450.0v3M1213.6,451.5h3M1215.1,450.0v3M1216.2,451.5h3M1217.7,450.0v3M1218.9,451.5h3M1220.4,450.0v3M1221.6,451.5h3M1223.1,450.0v3M1224.3,451.5h3M1225.8,450.0v3M1227.0,451.5h3M1228.5,450.0v3M1229.7,451.5h3M1231.2,450.0v3M1232.4,451.5h3M1233.9,450.0v3M1235.0,451.5h3M1236.5,450.0v3M1237.7,451.5h3M1239.2,450.0v3M1240.4,451.5h3M1241.9,450.0v3M1243.1,451.5h3M1244.6,450.0v3M1245.8,451.5h3M1247.3,450.0v3M1248.5,451.5h3M1250.0,450.0v3M1251.2,451.5h3M1252.7,450.0v3M1253.8,451.5h3M1255.3,450.0v3M1256.5,451.5h3M1258.0,450.0v3M1259.2,451.5h3M1260.7,450.0v3M1261.9,451.5h3M1263.4,450.0v3M1264.6,451.6h3M1266.1,450.1v3M1267.3,451.6h3M1268.8,450.1v3M1270.0,451.6h3M1271.5,450.1v3M1272.7,451.6h3M1274.2,450.1v3M1275.3,451.6h3M1276.8,450.1v3M1278.0,451.6h3M1279.5,450.1v3M1280.7,451.6h3M1282.2,450.1v3M1283.4,451.6h3M1284.9,450.1v3M1286.1,451.6h3M1287.6,450.1v3M1288.8,451.6h3M1290.3,450.1v3M1291.5,451.6h3M1293.0,450.1v3M1294.1,451.6h3M1295.6,450.1v3M1296.8,451.6h3M1298.3,450.1v3M1299.5,451.6h3M1301.0,450.1v3M1302.2,451.6h3M1303.7,450.1v3M1304.9,451.6h3M1306.4,450.1v3M1307.6,451.6h3M1309.1,450.1v3M1310.3,451.6h3M1311.8,450.1v3" stroke="#fff" stroke-width="1" fill="none"/>
<rect x="1175" y="336" width="163" height="21.5" fill="#c3c3c3" />
<rect x="1175" y="336" width="12.5" height="21.5" fill="url(#g1)" />
<rect x="1175" y="336" width="163" height="1" fill="#fff" fill-opacity="0.33"/>
<rect x="1325" y="336" width="13" height="21.5" fill="url(#g2)" />
<rect x="1175" y="356.3" width="163" height="1.2" fill="url(#g3)" />
<text x="1191.4" y="351" font-size="11.5" textLength="23" lengthAdjust="spacingAndGlyphs" >Data</text>
<rect x="1226.4" y="338.5" width="27.6" height="16.5" fill="#000" />
<path d="M1228,351.5h3M1229.5,350v3M1237,342.5h3M1238.5,341v3M1247,351.5h3M1248.5,350v3" stroke="#fff" stroke-width="1"/>
<text x="1261.4" y="351" font-size="11.5" textLength="12.6" lengthAdjust="spacingAndGlyphs" >Fit</text>
<rect x="1296.4" y="338.5" width="27.6" height="16.5" fill="#000" />
<path d="M1298.0,351.5 L1310.0,341.5 L1323.0,351.5" stroke="#ff4040" stroke-width="2" fill="none" stroke-linejoin="round" />
<rect x="1353" y="0.3" width="762" height="335.6" fill="#b4b4b4" />
<rect x="1353" y="0.3" width="762" height="3.5" fill="#fff" fill-opacity="0.27"/>
<rect x="1353" y="3.8" width="3.5" height="332.1" fill="#fff" fill-opacity="0.27"/>
<rect x="2110.6" y="0.3" width="4.4" height="335.6" fill="url(#g2)" />
<rect x="1353" y="331.5" width="762" height="4.4" fill="url(#g3)" />
<text x="1366" y="47.8" font-size="11.5" textLength="59.5" lengthAdjust="spacingAndGlyphs" >StoredWfm</text>
<rect x="1365" y="52" width="166.5" height="93.5" fill="#000" />
<rect x="1366" y="53" width="164.5" height="91.5" fill="#b4b4b4" />
<path d="M1366.5,144V53.5H1530" stroke="#e0e0e0" stroke-width="1" fill="none"/>
<path d="M1367,143.5H1529.5V54" stroke="#707070" stroke-width="2" fill="none"/>
<text x="1371.5" y="69.8" font-size="12" font-weight="bold" textLength="11.5" lengthAdjust="spacingAndGlyphs" >t0</text>
<rect x="1370" y="74.5" width="91" height="31" fill="#b9b9b9" />
<path d="M1370.5,105.5V75H1461" stroke="#7c7c7c" stroke-width="1" fill="none"/>
<path d="M1370,105H1460.5V74.5" stroke="#d8d8d8" stroke-width="1" fill="none"/>
<text x="1380.4" y="86.8" font-size="10.6" textLength="41.2" lengthAdjust="spacingAndGlyphs" >15:00:22</text>
<text x="1380.4" y="102" font-size="10.6" textLength="57.6" lengthAdjust="spacingAndGlyphs" >07/06/2024</text>
<text x="1371.3" y="118" font-size="12" font-weight="bold" textLength="12.5" lengthAdjust="spacingAndGlyphs" >dt</text>
<rect x="1370" y="122" width="91" height="18.5" fill="#b9b9b9" />
<path d="M1370.5,140.5V122.5H1461" stroke="#7c7c7c" stroke-width="1" fill="none"/>
<path d="M1370,140H1460.5V122" stroke="#d8d8d8" stroke-width="1" fill="none"/>
<text x="1379.3" y="135" font-size="10.6" textLength="44.7" lengthAdjust="spacingAndGlyphs" >0.000000</text>
<text x="1465" y="71.6" font-size="12" font-weight="bold" textLength="7.5" lengthAdjust="spacingAndGlyphs" >Y</text>
<rect x="1476.3" y="58.3" width="48.2" height="19.5" fill="#b9b9b9" />
<path d="M1476.8,77.8V58.8H1524.5" stroke="#7c7c7c" stroke-width="1" fill="none"/>
<path d="M1476.3,77.3H1524V58.3" stroke="#d8d8d8" stroke-width="1" fill="none"/>
<rect x="1478" y="61" width="7" height="15.5" fill="#c8c8c8" />
<path d="M1478.5,76.5V61.5H1485" stroke="#e8e8e8" stroke-width="1" fill="none"/><path d="M1478,76H1484.5V61" stroke="#707070" stroke-width="1" fill="none"/><path d="M1478,68.7H1485" stroke="#707070" stroke-width="1"/>
<path d="M1479.3,66.5L1481.5,62.6L1483.7,66.5ZM1479.3,71L1481.5,74.9L1483.7,71Z" fill="#000"/>
<text x="1487.8" y="72.5" font-size="10.6" >0</text>
<path d="M1464.5,140.5V78.9H1525.6" stroke="#7c7c7c" stroke-width="1" fill="none"/>
<path d="M1464,140H1525.1V78.4" stroke="#d8d8d8" stroke-width="1" fill="none"/>
<rect x="1467.3" y="81.4" width="55.1" height="17.3" fill="#b9b9b9" />
<path d="M1467.8,98.7V81.9H1522.4" stroke="#7c7c7c" stroke-width="1" fill="none"/>
<path d="M1467.3,98.2H1521.9V81.4" stroke="#d8d8d8" stroke-width="1" fill="none"/>
<text x="1469.3" y="94.7" font-size="10.6" textLength="43.7" lengthAdjust="spacingAndGlyphs" >0.000671</text>
<rect x="1467.3" y="100.7" width="55.1" height="17.3" fill="#b9b9b9" />
<path d="M1467.8,118V101.2H1522.4" stroke="#7c7c7c" stroke-width="1" fill="none"/>
<path d="M1467.3,117.5H1521.9V100.7" stroke="#d8d8d8" stroke-width="1" fill="none"/>
<text x="1469.3" y="114" font-size="10.6" textLength="43.7" lengthAdjust="spacingAndGlyphs" >0.000744</text>
<rect x="1467.3" y="119.6" width="55.1" height="17.4" fill="#b9b9b9" />
<path d="M1467.8,137V120.1H1522.4" stroke="#7c7c7c" stroke-width="1" fill="none"/>
<path d="M1467.3,136.5H1521.9V119.6" stroke="#d8d8d8" stroke-width="1" fill="none"/>
<text x="1469.3" y="133" font-size="10.6" textLength="43.7" lengthAdjust="spacingAndGlyphs" >0.000803</text>
<text x="1371" y="199" font-size="11.5" textLength="87.3" lengthAdjust="spacingAndGlyphs" >Space charge (V)</text>
<path d="M1384,204.5H1438L1434,208H1387.8V224.7L1384,228.3Z" fill="#8c8c8c"/>
<path d="M1438,228.3H1384L1387.8,224.7H1434V208L1438,204.5Z" fill="#cfcfcf"/>
<rect x="1387.8" y="208" width="46.2" height="16.7" fill="#d6d6d6" />
<text x="1390.3" y="221" font-size="10.6" textLength="19.7" lengthAdjust="spacingAndGlyphs" >2.21</text>
<text x="1480.6" y="199" font-size="11.5" textLength="56.6" lengthAdjust="spacingAndGlyphs" >dV/dt (V/s)</text>
<rect x="1468" y="202" width="11.4" height="26" rx="5.5" ry="6" fill="url(#pill)" stroke="#8a8a8a" stroke-width="0.6"/>
<path d="M1468.3,215.2H1479.2" stroke="#888" stroke-width="1"/>
<path d="M1471.2,211.2L1473.7,206.4L1476.2,211.2M1471.2,219.2L1473.7,224L1476.2,219.2Z" stroke="#555" stroke-width="0.8" fill="none"/>
<path d="M1479.4,204H1533L1529,207.2H1482.8V224L1479.4,228Z" fill="#8c8c8c"/>
<path d="M1533,228H1479.4L1482.8,224H1529V207.2L1533,204Z" fill="#cfcfcf"/>
<rect x="1482.8" y="207.2" width="46.2" height="16.8" fill="#ffffff" />
<text x="1486" y="220.2" font-size="10.6" textLength="26" lengthAdjust="spacingAndGlyphs" >1.33k</text>
<text x="1403" y="263" font-size="15" textLength="110" lengthAdjust="spacingAndGlyphs" >Temperature (K)</text>
<path d="M1427,270H1497L1493,273.6H1430V295.6L1427,299Z" fill="#8c8c8c"/>
<path d="M1497,299H1427L1430,295.6H1493V273.6L1497,270Z" fill="#cfcfcf"/>
<rect x="1430" y="273.6" width="63" height="22" fill="#d6d6d6" />
<text x="1434" y="290.4" font-size="14.5" textLength="25" lengthAdjust="spacingAndGlyphs" >191</text>
<text x="1566.4" y="30" font-size="11.5" textLength="49.2" lengthAdjust="spacingAndGlyphs" >AnalWfm</text>
<rect x="1558" y="36.5" width="503" height="282.5" fill="#c0c0c0" />
<rect x="1558" y="36.5" width="12.5" height="282.5" fill="url(#g1)" />
<rect x="1558" y="36.5" width="503" height="2.5" fill="#fff" fill-opacity="0.33"/>
<rect x="2048" y="36.5" width="13" height="282.5" fill="url(#g2)" />
<rect x="1558" y="316.5" width="503" height="2.5" fill="url(#g3)" />
<rect x="2060" y="36.5" width="1" height="282.5" fill="#000" fill-opacity="0.45"/>
<rect x="1644.3" y="45.7" width="392.7" height="232.3" fill="#000" />
<path d="M1651.5,45.7V278M1656.5,45.7V278M1662.5,45.7V278M1667.5,45.7V278M1673.5,45.7V278M1679.5,45.7V278M1684.5,45.7V278M1690.5,45.7V278M1695.5,45.7V278M1701.5,45.7V278M1706.5,45.7V278M1712.5,45.7V278M1718.5,45.7V278M1723.5,45.7V278M1729.5,45.7V278M1734.5,45.7V278M1740.5,45.7V278M1745.5,45.7V278M1751.5,45.7V278M1757.5,45.7V278M1762.5,45.7V278M1768.5,45.7V278M1773.5,45.7V278M1779.5,45.7V278M1784.5,45.7V278M1790.5,45.7V278M1796.5,45.7V278M1801.5,45.7V278M1807.5,45.7V278M1812.5,45.7V278M1818.5,45.7V278M1824.5,45.7V278M1829.5,45.7V278M1835.5,45.7V278M1840.5,45.7V278M1846.5,45.7V278M1851.5,45.7V278M1857.5,45.7V278M1863.5,45.7V278M1868.5,45.7V278M1874.5,45.7V278M1879.5,45.7V278M1885.5,45.7V278M1890.5,45.7V278M1896.5,45.7V278M1902.5,45.7V278M1907.5,45.7V278M1913.5,45.7V278M1918.5,45.7V278M1924.5,45.7V278M1929.5,45.7V278M1935.5,45.7V278M1941.5,45.7V278M1946.5,45.7V278M1952.5,45.7V278M1957.5,45.7V278M1963.5,45.7V278M1968.5,45.7V278M1974.5,45.7V278M1980.5,45.7V278M1985.5,45.7V278M1991.5,45.7V278M1996.5,45.7V278M2002.5,45.7V278M2007.5,45.7V278M2013.5,45.7V278M2019.5,45.7V278M2024.5,45.7V278M2030.5,45.7V278M1644.3,264.5H2037M1644.3,250.5H2037M1644.3,242.5H2037M1644.3,236.5H2037M1644.3,218.5H2037M1644.3,205.5H2037M1644.3,197.5H2037M1644.3,191.5H2037M1644.3,173.5H2037M1644.3,159.5H2037M1644.3,151.5H2037M1644.3,145.5H2037M1644.3,127.5H2037M1644.3,113.5H2037M1644.3,105.5H2037M1644.3,100.5H2037M1644.3,81.5H2037M1644.3,68.5H2037M1644.3,60.5H2037M1644.3,54.5H2037" stroke="#003a00" stroke-width="1" fill="none"/>
<path d="M1701.5,45.7V278M1757.5,45.7V278M1812.5,45.7V278M1868.5,45.7V278M1924.5,45.7V278M1980.5,45.7V278M1644.3,232.5H2037M1644.3,186.5H2037M1644.3,141.5H2037M1644.3,95.5H2037M1644.3,50.5H2037" stroke="#007000" stroke-width="1" fill="none"/>
<path d="M1643.8,278V45.2H2037" stroke="#5a5a5a" stroke-width="1" fill="none"/>
<path d="M1644.3,278.5H2037.5V45.7" stroke="#e4e4e4" stroke-width="1" fill="none"/>
<path d="M1638,46.5H1642.5M1638,50.5H1642.5M1638,95.5H1642.5M1638,141.5H1642.5M1638,186.5H1642.5M1638,232.5H1642.5M1638,278.5H1642.5" stroke="#000" stroke-width="1" fill="none"/>
<text x="1635.5" y="50.7893" font-size="10.6" text-anchor="end" >12</text>
<text x="1635.5" y="100" font-size="10.6" text-anchor="end" >1</text>
<text x="1635.5" y="145.6" font-size="10.6" text-anchor="end" >0.1</text>
<text x="1635.5" y="191.2" font-size="10.6" text-anchor="end" >0.01</text>
<text x="1635.5" y="236.8" font-size="10.6" text-anchor="end" >0.001</text>
<text x="1635.5" y="282.4" font-size="10.6" text-anchor="end" >0.0001</text>
<path d="M1645.5,280V284.5M1701.5,280V284.5M1757.5,280V284.5M1812.5,280V284.5M1868.5,280V284.5M1924.5,280V284.5M1980.5,280V284.5M2035.5,280V284.5" stroke="#000" stroke-width="1" fill="none"/>
<text x="1645.9" y="297" font-size="10.6" text-anchor="middle" >0</text>
<text x="1701.65" y="297" font-size="10.6" text-anchor="middle" >5E-5</text>
<text x="1757.4" y="297" font-size="10.6" text-anchor="middle" >0.0001</text>
<text x="1813.15" y="297" font-size="10.6" text-anchor="middle" >0.00015</text>
<text x="1868.9" y="297" font-size="10.6" text-anchor="middle" >0.0002</text>
<text x="1924.65" y="297" font-size="10.6" text-anchor="middle" >0.00025</text>
<text x="1980.4" y="297" font-size="10.6" text-anchor="middle" >0.0003</text>
<text x="2036.15" y="297" font-size="10.6" text-anchor="middle" >0.00035</text>
<text transform="translate(1597,162) rotate(-90)" font-size="11.5" text-anchor="middle" textLength="72.5" lengthAdjust="spacingAndGlyphs">Amplitude (V)</text>
<text x="1820" y="313.4" font-size="11.5" textLength="40.4" lengthAdjust="spacingAndGlyphs" >Time (s)</text>
<path d="M1645.6,45.7V278" stroke="#ffff00" stroke-width="1.3"/>
<path d="M1826.6,45.7V278" stroke="#80ff00" stroke-width="1.1"/>
<path d="M1848.6,45.7V278" stroke="#ff1010" stroke-width="1.1"/>
<g clip-path="url(#p4clip)">
<path d="M1720.5,279.0 L1884.8,45.0" stroke="#ff4048" stroke-width="2.4" fill="none" stroke-linejoin="round" />
<path d="M1646.0,236.0h0M1646.4,235.2h0M1646.8,234.3h0M1647.3,233.5h0M1647.7,232.6h0M1648.1,231.9h0M1648.5,231.7h0M1648.9,231.5h0M1649.4,231.3h0M1649.8,231.1h0M1650.2,231.5h0M1650.6,232.6h0M1651.0,233.6h0M1651.5,234.7h0M1651.9,235.7h0M1652.3,238.0h0M1652.7,250.5h0M1663.0,261.0h0M1663.4,246.3h0M1663.8,236.4h0M1664.3,230.1h0M1664.7,224.3h0M1665.1,219.7h0M1665.5,218.4h0M1665.9,217.2h0M1666.4,215.9h0M1666.8,214.7h0M1667.2,214.4h0M1667.6,215.2h0M1668.0,216.1h0M1668.5,216.9h0M1668.9,217.8h0M1669.3,218.6h0M1669.7,219.4h0M1670.1,220.6h0M1670.6,222.6h0M1671.0,224.5h0M1671.4,226.4h0M1671.8,228.3h0M1672.2,230.3h0M1672.7,229.7h0M1673.1,227.6h0M1673.5,225.5h0M1673.9,223.4h0M1674.3,221.3h0M1674.8,219.2h0M1675.2,217.5h0M1675.6,216.2h0M1676.0,214.9h0M1676.4,213.7h0M1676.9,212.4h0M1677.3,211.2h0M1677.7,209.9h0M1678.1,208.9h0M1678.5,208.6h0M1679.0,208.2h0M1679.4,207.9h0M1679.8,207.6h0M1680.2,207.2h0M1680.6,206.9h0M1681.1,206.6h0M1681.5,206.2h0M1681.9,205.9h0M1682.3,205.5h0M1682.7,205.2h0M1683.2,205.6h0M1683.6,207.1h0M1684.0,208.7h0M1684.4,210.2h0M1684.8,211.7h0M1685.3,213.3h0M1685.7,214.8h0M1686.1,216.7h0M1686.5,219.6h0M1686.9,222.6h0M1687.4,225.5h0M1687.8,228.5h0M1688.2,231.2h0M1688.6,233.7h0M1689.0,236.2h0M1689.5,238.8h0M1689.9,241.3h0M1690.3,245.8h0M1690.7,251.0h0M1691.1,269.0h0M1708.0,274.0h0M1708.4,268.1h0M1708.8,262.2h0M1709.3,257.4h0M1709.7,253.2h0M1710.1,251.6h0M1710.5,258.3h0M1710.9,265.0h0M1711.4,258.8h0M1711.8,250.4h0M1712.2,244.8h0M1712.6,242.3h0M1713.0,239.6h0M1713.5,235.4h0M1713.9,231.2h0M1714.3,226.4h0M1714.7,221.4h0M1715.1,217.6h0M1715.6,216.6h0M1716.0,215.5h0M1716.4,214.5h0M1716.8,213.4h0M1717.2,213.7h0M1717.7,215.0h0M1718.1,216.2h0M1718.5,217.5h0M1718.9,218.8h0M1719.3,222.7h0M1719.8,227.4h0M1720.2,231.8h0M1720.6,236.0h0M1721.0,240.2h0M1721.4,245.3h0M1721.9,250.3h0M1722.3,261.8h0M1741.0,278.0h0M1741.4,271.3h0M1741.8,264.6h0M1742.3,257.8h0M1742.7,251.1h0M1743.1,244.6h0M1743.5,238.7h0M1743.9,232.8h0M1744.4,227.7h0M1744.8,222.6h0M1745.2,218.4h0M1745.6,215.0h0M1746.0,211.9h0M1746.5,211.1h0M1746.9,210.2h0M1747.3,209.4h0M1747.7,208.6h0M1748.1,207.7h0M1748.6,206.9h0M1749.0,206.0h0M1749.4,205.2h0M1749.8,204.4h0M1750.2,204.5h0M1750.7,205.3h0M1751.1,206.2h0M1751.5,207.0h0M1751.9,207.8h0M1752.3,208.7h0M1752.8,209.5h0M1753.2,210.6h0M1753.6,212.0h0M1754.0,213.4h0M1754.4,214.8h0M1754.9,216.2h0M1755.3,217.6h0M1755.7,219.0h0M1756.1,220.7h0M1756.5,223.2h0M1757.0,225.8h0M1757.4,228.3h0M1757.8,230.8h0M1758.2,232.8h0M1758.6,234.3h0M1759.1,235.8h0M1759.5,235.5h0M1759.9,227.8h0M1760.3,224.4h0M1760.7,222.3h0M1761.2,220.2h0M1761.6,218.1h0M1762.0,216.0h0M1762.4,215.5h0M1762.8,214.9h0M1763.3,214.4h0M1763.7,213.9h0M1764.1,213.4h0M1764.5,213.4h0M1764.9,214.7h0M1765.4,216.0h0M1765.8,217.2h0M1766.2,218.5h0M1766.6,219.8h0M1767.0,221.1h0M1767.5,221.9h0M1767.9,222.8h0M1768.3,223.6h0M1768.7,224.4h0M1769.1,225.3h0M1769.6,226.1h0M1770.0,227.0h0M1770.4,229.2h0M1770.8,231.5h0M1771.2,233.8h0M1771.7,236.1h0M1772.1,238.8h0M1772.5,243.0h0M1772.9,247.2h0M1773.3,251.4h0M1773.8,255.6h0M1774.2,259.3h0M1774.6,262.2h0M1775.0,234.0h0M1775.4,227.0h0M1775.8,220.4h0M1776.3,214.1h0M1776.7,208.7h0M1777.1,204.8h0M1777.5,204.1h0M1777.9,203.4h0M1778.4,202.7h0M1778.8,202.0h0M1779.2,201.3h0M1779.6,200.6h0M1780.0,200.0h0M1780.5,200.1h0M1780.9,200.2h0M1781.3,200.3h0M1781.7,200.3h0M1782.1,200.4h0M1782.6,200.5h0M1783.0,200.6h0M1783.4,200.7h0M1783.8,200.8h0M1784.2,200.8h0M1784.7,200.9h0M1785.1,200.9h0M1785.5,200.2h0M1785.9,199.5h0M1786.3,198.8h0M1786.8,198.1h0M1787.2,197.4h0M1787.6,196.7h0M1788.0,196.0h0M1788.4,195.4h0M1788.9,194.9h0M1789.3,194.3h0M1789.7,193.7h0M1790.1,193.2h0M1790.5,192.6h0M1791.0,192.1h0M1791.4,191.5h0M1791.8,190.9h0M1792.2,190.4h0M1792.6,189.8h0M1793.1,189.3h0M1793.5,188.7h0M1793.9,188.1h0M1794.3,186.4h0M1794.7,184.3h0M1795.2,182.2h0M1795.6,180.1h0M1796.0,178.3h0M1796.4,176.6h0M1796.8,174.8h0M1797.3,173.1h0M1797.7,171.3h0M1798.1,169.7h0M1798.5,168.7h0M1798.9,167.6h0M1799.4,166.6h0M1799.8,165.5h0M1800.2,164.7h0M1800.6,164.2h0M1801.0,163.6h0M1801.5,163.1h0M1801.9,162.6h0M1802.3,162.0h0M1802.7,161.5h0M1803.1,160.9h0M1803.6,160.4h0M1804.0,159.8h0M1804.4,159.3h0M1804.8,158.7h0M1805.2,158.2h0M1805.7,157.6h0M1806.1,157.1h0M1806.5,156.5h0M1806.9,156.0h0M1807.3,155.5h0M1807.8,154.9h0M1808.2,154.4h0M1808.6,153.8h0M1809.0,153.3h0M1809.4,152.7h0M1809.9,152.2h0M1810.3,151.7h0M1810.7,151.2h0M1811.1,150.7h0M1811.5,150.2h0M1812.0,149.6h0M1812.4,149.1h0M1812.8,148.6h0M1813.2,148.1h0M1813.6,147.6h0M1814.1,147.1h0M1814.5,146.6h0M1814.9,146.1h0M1815.3,145.6h0M1815.7,145.1h0M1816.2,144.6h0M1816.6,144.1h0M1817.0,143.6h0M1817.4,143.1h0M1817.8,142.6h0M1818.3,142.1h0M1818.7,141.6h0M1819.1,141.1h0M1819.5,140.6h0M1819.9,140.1h0M1820.4,139.2h0M1820.8,138.3h0M1821.2,137.4h0M1821.6,136.5h0M1822.0,135.6h0M1822.5,134.7h0M1822.9,133.8h0M1823.3,132.8h0M1823.7,131.9h0M1824.1,131.0h0M1824.6,130.1h0M1825.0,129.2h0M1825.4,128.3h0M1825.8,127.4h0M1826.2,126.7h0M1826.7,126.1h0M1827.1,125.5h0M1827.5,124.9h0M1827.9,124.3h0M1828.3,123.7h0M1828.8,123.1h0M1829.2,122.5h0M1829.6,121.9h0M1830.0,121.3h0M1830.4,120.7h0M1830.9,120.1h0M1831.3,119.5h0M1831.7,118.9h0M1832.1,118.3h0M1832.5,117.7h0M1833.0,117.1h0M1833.4,116.5h0M1833.8,115.9h0M1834.2,115.4h0M1834.6,114.8h0M1835.1,114.2h0M1835.5,113.6h0M1835.9,113.0h0M1836.3,112.4h0M1836.7,111.8h0M1837.2,111.2h0M1837.6,110.6h0M1838.0,110.0h0M1838.4,109.2h0M1838.8,108.5h0M1839.3,107.7h0M1839.7,106.9h0M1840.1,106.1h0M1840.5,105.4h0M1840.9,104.6h0M1841.4,103.8h0M1841.8,103.1h0M1842.2,102.3h0M1842.6,101.5h0M1843.0,100.8h0M1843.5,100.0h0M1843.9,99.2h0" stroke="#fff" stroke-width="1.7" stroke-linecap="square" fill="none"/>
<path d="M1838.0,110.0 L1841.0,104.5 L1844.0,99.0 L1847.0,96.0 L1850.0,93.0 L1853.0,89.6 L1856.0,86.2 L1859.0,83.1 L1862.0,80.5 L1865.0,77.9 L1868.0,75.8 L1871.0,74.1 L1874.0,72.3 L1877.0,70.6 L1880.0,69.3 L1883.0,68.3 L1886.0,67.4 L1889.0,66.7 L1892.0,65.5 L1895.0,64.9 L1898.0,64.3 L1901.0,63.3 L1904.0,62.9 L1907.0,62.4 L1910.0,61.9 L1913.0,60.9 L1916.0,60.8 L1919.0,60.3 L1922.0,60.7 L1925.0,60.3 L1928.0,59.4 L1931.0,60.0 L1934.0,59.8 L1937.0,59.3 L1940.0,59.1 L1943.0,58.5 L1946.0,58.2 L1949.0,58.5 L1952.0,57.9 L1955.0,57.9 L1958.0,57.8 L1961.0,57.5 L1964.0,57.8 L1967.0,57.6 L1970.0,57.8 L1973.0,57.4 L1976.0,57.4 L1979.0,57.2 L1982.0,57.2 L1985.0,56.9 L1988.0,56.6 L1991.0,57.1 L1994.0,57.0 L1997.0,56.7 L2000.0,56.5 L2003.0,56.0 L2006.0,55.8 L2007.0,56.0" stroke="#fff" stroke-width="2.2" fill="none" stroke-linejoin="round" />
<path d="M1822.6,127.4h8M1826.6,123.4v8M1824,124.8l5.2,5.2M1824,130l5.2,-5.2" stroke="#80ff00" stroke-width="0.8"/>
<path d="M1844.6,96h8M1848.6,92v8M1846,93.4l5.2,5.2M1846,98.6l5.2,-5.2" stroke="#ff1010" stroke-width="0.8"/>
<path d="M1642.6,238h7M1645.6,234.5v7M1643.4,235.6l4.6,4.6M1643.4,240.2l4.6,-4.6" stroke="#ffff00" stroke-width="0.8"/>
</g>
<rect x="1905" y="11" width="169.5" height="22.5" fill="#c3c3c3" />
<rect x="1905" y="11" width="12.5" height="22.5" fill="url(#g1)" />
<rect x="1905" y="11" width="169.5" height="1" fill="#fff" fill-opacity="0.33"/>
<rect x="2061.5" y="11" width="13" height="22.5" fill="url(#g2)" />
<rect x="1905" y="32.3" width="169.5" height="1.2" fill="url(#g3)" />
<text x="1920" y="26" font-size="11.5" textLength="27" lengthAdjust="spacingAndGlyphs" >SiPM</text>
<rect x="1958.4" y="13.6" width="27.6" height="17.4" fill="#000" />
<path d="M1960.5,28.6h1.6v1.6h-1.6zM1969.5,15.6h1.6v1.6h-1.6zM1979.5,25.6h1.6v1.6h-1.6z" fill="#fff"/>
<text x="1993.4" y="26" font-size="11.5" textLength="12.6" lengthAdjust="spacingAndGlyphs" >Fit</text>
<rect x="2031.4" y="13.6" width="27.6" height="17.4" fill="#000" />
<path d="M2033.0,27.0 L2045.5,16.5 L2058.0,26.0" stroke="#ff4048" stroke-width="2" fill="none" stroke-linejoin="round" /></svg></body></html>
